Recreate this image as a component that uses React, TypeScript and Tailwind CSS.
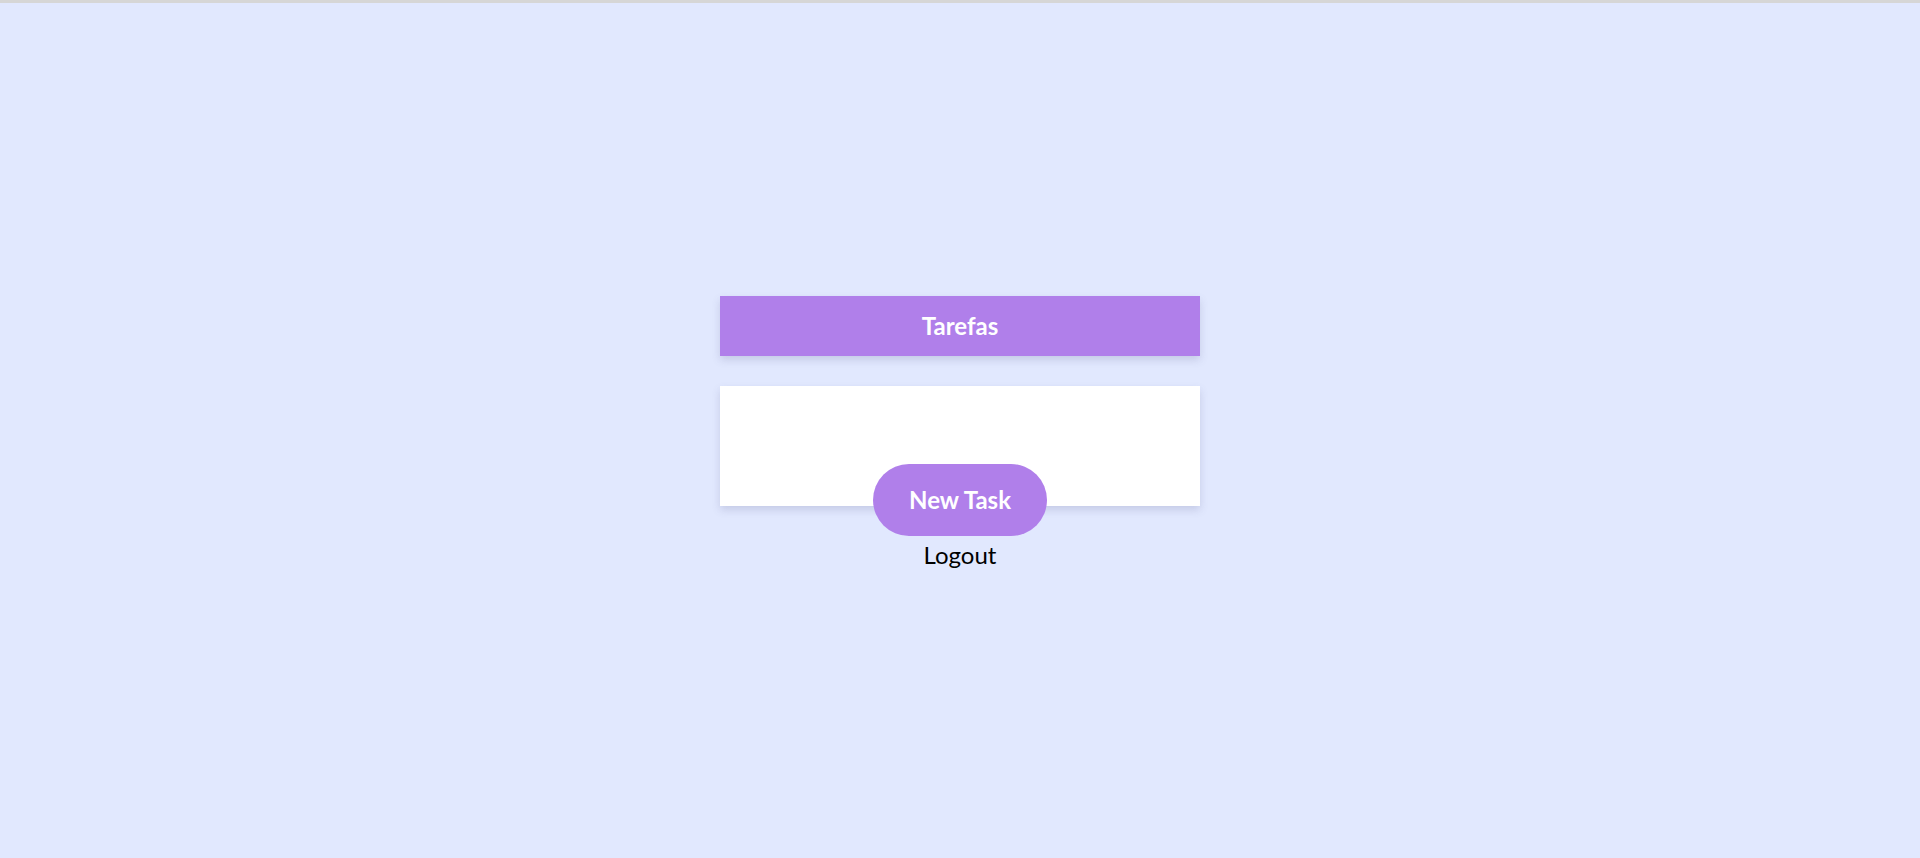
const App = () => {
    return (
        <div className="min-h-screen w-full border-t-[3px] border-[#d6d6d6] bg-[#e1e8fe] pt-[5px] flex items-center justify-center font-['Lato',sans-serif]">
            <div className="w-[480px] flex flex-col items-center">
                <div className="w-full h-[60px] bg-[#b07fea] shadow-[0_4px_8px_rgba(90,90,140,0.2)] flex items-center justify-center">
                    <h1 className="text-white text-[24px] font-bold leading-none">
                        Tarefas
                    </h1>
                </div>
                <div className="w-full h-[120px] mt-[30px] bg-white shadow-[0_4px_8px_rgba(90,90,140,0.2)]" />
                <button className="-mt-[42px] w-[174px] h-[72px] rounded-full bg-[#b07fea] text-white text-[24px] font-bold leading-none">
                    New Task
                </button>
                <button className="mt-[4px] text-black text-[24px] leading-[30px]">
                    Logout
                </button>
            </div>
        </div>
    );
};

export default App;
